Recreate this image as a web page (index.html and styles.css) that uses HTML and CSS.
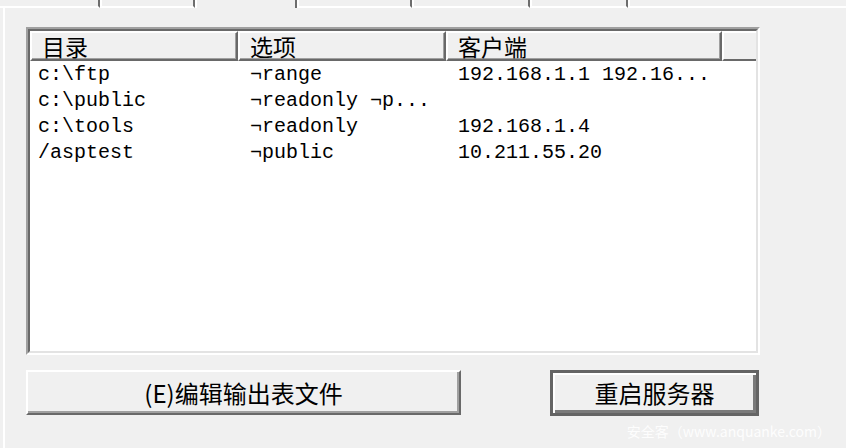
FILE: index.html
```html
<!DOCTYPE html>
<html lang="zh-CN">
<head>
<meta charset="utf-8">
<title>NFS 导出</title>
<link rel="stylesheet" href="styles.css">
</head>
<body>
<div class="tabs">
  <div class="tab t0 first"></div>
  <div class="tab t1"></div>
  <div class="tab t2 sel"></div>
  <div class="tab t3"></div>
  <div class="tab t4"></div>
  <div class="tab t5"></div>
  <div class="tab last"></div>
</div>
<div class="pane">
  <div class="listview">
    <div class="lv-inner">
      <div class="lv-head">
        <div class="hcell c1">目录</div>
        <div class="hcell c2">选项</div>
        <div class="hcell c3">客户端</div>
        <div class="hcell c4"></div>
      </div>
      <div class="row"><div class="cell c1">c:\ftp</div><div class="cell c2">¬range</div><div class="cell c3">192.168.1.1 192.16...</div></div>
      <div class="row"><div class="cell c1">c:\public</div><div class="cell c2">¬readonly ¬p...</div><div class="cell c3"></div></div>
      <div class="row"><div class="cell c1">c:\tools</div><div class="cell c2">¬readonly</div><div class="cell c3">192.168.1.4</div></div>
      <div class="row"><div class="cell c1">/asptest</div><div class="cell c2">¬public</div><div class="cell c3">10.211.55.20</div></div>
    </div>
  </div>
  <div class="actions">
    <button class="btn btn-edit">(E)编辑输出表文件</button>
    <button class="btn btn-default">重启服务器</button>
  </div>
</div>
<div class="watermark">安全客（www.anquanke.com）</div>
</body>
</html>
```
FILE: styles.css
```css
html, body {
  margin: 0;
  padding: 0;
}
body {
  width: 846px;
  height: 448px;
  overflow: hidden;
  position: relative;
  background: #f0f0f0;
  font-family: "Noto Sans CJK SC", "Liberation Sans", sans-serif;
  color: #000;
}

.tabs {
  display: flex;
  height: 8px;
}
.tab {
  box-sizing: border-box;
  height: 8px;
  border-left: 2px solid #fff;
  border-right: 2px solid #6d6d6d;
  border-bottom: 2px solid #fff;
}
.tab.first { border-left: none; width: 100px; }
.t1 { width: 95px; }
.t2 { width: 102px; }
.t3 { width: 115px; }
.t4 { width: 118px; }
.t5 { width: 98px; }
.tab.sel { border-bottom: none; }
.tab.last { border-right: none; flex: 1; }

.pane {
  box-sizing: border-box;
  height: 440px;
  margin-left: 3px;
  border-left: 2px solid #fff;
  padding: 19px 0 0 21px;
}

.listview {
  box-sizing: border-box;
  width: 734px;
  height: 328px;
  border: 2px solid;
  border-color: #a0a0a0 #fff #fff #a0a0a0;
}
.lv-inner {
  box-sizing: border-box;
  height: 100%;
  border: 2px solid;
  border-color: #696969 #e3e3e3 #e3e3e3 #696969;
  background: #fff;
  display: flex;
  flex-direction: column;
}

.lv-head {
  display: flex;
  height: 30px;
  flex: none;
  background: #f0f0f0;
}
.hcell {
  box-sizing: border-box;
  height: 30px;
  border: 2px solid;
  border-color: #fff #696969 #696969 #fff;
  box-shadow: inset -1px -1px 0 #a0a0a0;
  font-size: 23px;
  line-height: 26px;
  white-space: nowrap;
}
.c1 { width: 208px; padding-left: 6px; }
.c2 { width: 208px; padding-left: 10px; }
.c3 { width: 276px; padding-left: 10px; }
.hcell.c4 { flex: 1; border-right: none; box-shadow: none; }
.hcell.c1 { padding-left: 10px; }

.rows {
  display: flex;
  flex-direction: column;
}
.row {
  display: flex;
  height: 26px;
  font-family: "Liberation Mono", "DejaVu Sans Mono", monospace;
  font-size: 20px;
  line-height: 28px;
}
.cell {
  box-sizing: border-box;
  white-space: pre;
  overflow: hidden;
}
.cell.c1 { padding-left: 8px; }
.cell.c2 { padding-left: 12px; }
.cell.c3 { padding-left: 12px; }

.actions {
  display: flex;
  align-items: flex-start;
  margin-top: 15px;
}
.btn {
  box-sizing: border-box;
  margin: 0;
  padding: 0;
  background: #f0f0f0;
  font-family: "Noto Sans CJK SC", "Liberation Sans", sans-serif;
  font-size: 24px;
  line-height: 30px;
  color: #000;
  text-align: center;
}
.btn-edit {
  width: 435px;
  height: 45px;
  border: 2px solid;
  border-color: #fff #696969 #696969 #fff;
  box-shadow: inset -2px -2px 0 #a0a0a0;
}
.btn-default {
  width: 209px;
  height: 46px;
  margin-left: 89px;
  border: 3px solid #646464;
  box-shadow: inset 2px 2px 0 #fff, inset -3px -3px 0 #7a7a7a;
}

.watermark {
  position: absolute;
  right: 15px;
  bottom: 8px;
  font-family: "Noto Sans CJK SC", "Liberation Sans", sans-serif;
  font-size: 14px;
  line-height: 18px;
  color: rgba(255, 255, 255, 0.9);
}
```
